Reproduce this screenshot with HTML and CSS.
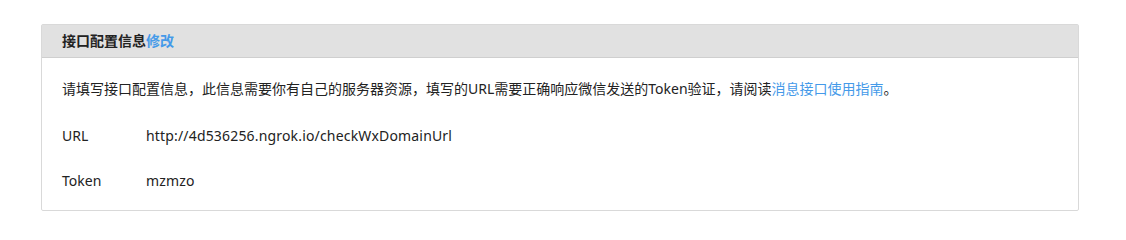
FILE: index.html
```html
<!DOCTYPE html>
<html lang="zh-CN">
<head>
<meta charset="utf-8">
<title>接口配置信息</title>
<link rel="stylesheet" href="styles.css">
</head>
<body>
<section class="panel">
  <header class="panel-head">
    <h3 class="panel-title">接口配置信息<a class="link" href="#">修改</a></h3>
  </header>
  <div class="panel-body">
    <p class="desc">请填写接口配置信息，此信息需要你有自己的服务器资源，填写的URL需要正确响应微信发送的Token验证，请阅读<a class="link" href="#">消息接口使用指南</a>。</p>
    <dl class="fields">
      <dt class="label">URL</dt>
      <dd class="value">http://4d536256.ngrok.io/checkWxDomainUrl</dd>
      <dt class="label">Token</dt>
      <dd class="value">mzmzo</dd>
    </dl>
  </div>
</section>
</body>
</html>
```

FILE: styles.css
```css
html, body {
  margin: 0;
  padding: 0;
  background: #ffffff;
}
body {
  padding: 24px 0 0 41px;
  font-family: "Noto Sans", "Noto Sans CJK SC", sans-serif;
  font-size: 14px;
  color: #222222;
}
.panel {
  width: 1036px;
  border: 1px solid #d9d9d9;
  border-radius: 2px;
  background: #fff;
}
.panel-head {
  height: 32px;
  background: #e1e1e1;
  border-bottom: 1px solid #cfcfcf;
  padding: 0 20px;
}
.panel-title {
  margin: 0;
  font-size: 14px;
  font-weight: bold;
  line-height: 32px;
  color: #222;
}
.link {
  color: #459ae9;
  text-decoration: none;
}
.panel-body {
  padding: 20px 20px 18px;
}
.desc {
  margin: 0;
  line-height: 22px;
}
.fields {
  display: grid;
  grid-template-columns: 84px 1fr;
  row-gap: 23px;
  margin: 25px 0 0;
  line-height: 22px;
}
.label, .value {
  margin: 0;
}
.value {
  letter-spacing: 0.17px;
}
```
